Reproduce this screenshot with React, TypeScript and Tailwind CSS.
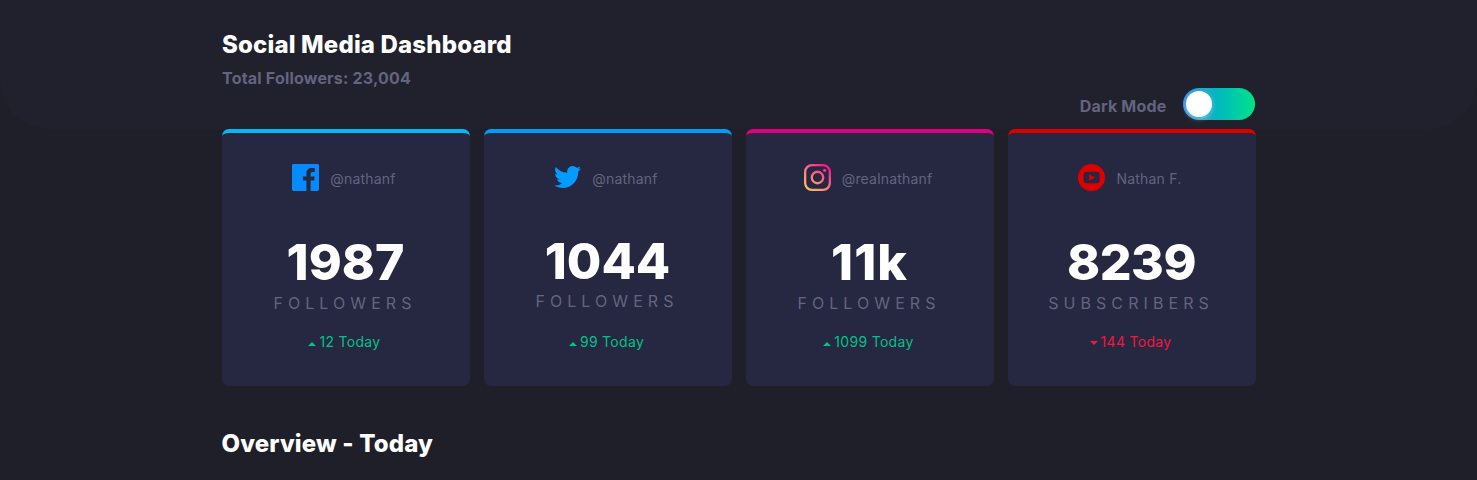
import React from "react";

type CardData = {
  bar: string;
  icon: React.ReactNode;
  handle: string;
  count: string;
  tracking: string;
  label: string;
  change: string;
  down?: boolean;
  shift?: boolean;
};

const Facebook = () => (
  <svg viewBox="0 0 20 20" className="h-[27px] w-[27px]">
    <path
      fill="#048bff"
      d="M18.896 0H1.104C.494 0 0 .494 0 1.104v17.793C0 19.506.494 20 1.104 20h9.58v-7.745H8.076V9.237h2.606V7.01c0-2.583 1.578-3.99 3.883-3.99 1.104 0 2.052.082 2.329.119v2.7h-1.598c-1.254 0-1.496.597-1.496 1.47v1.928h2.989l-.39 3.018h-2.6V20h5.098c.608 0 1.102-.494 1.102-1.104V1.104C20 .494 19.506 0 18.896 0z"
    />
  </svg>
);

const Twitter = () => (
  <svg viewBox="0 -1.25 20 20" className="h-[27px] w-[27px]">
    <path
      fill="#029bff"
      d="M20 2.172a8.192 8.192 0 01-2.357.646 4.11 4.11 0 001.805-2.27 8.22 8.22 0 01-2.606.996A4.096 4.096 0 0013.847.248c-2.65 0-4.596 2.472-3.998 5.037A11.648 11.648 0 011.392 1 4.109 4.109 0 002.662 6.478 4.086 4.086 0 01.8 5.964c-.045 1.901 1.318 3.68 3.291 4.075a4.113 4.113 0 01-1.853.07 4.106 4.106 0 003.833 2.849A8.25 8.25 0 010 14.658a11.616 11.616 0 006.29 1.843c7.618 0 11.922-6.434 11.662-12.205A8.354 8.354 0 0020 2.172z"
    />
  </svg>
);

const Instagram = () => (
  <svg viewBox="0 0 20 20" className="h-[27px] w-[27px]">
    <defs>
      <linearGradient id="ig" gradientUnits="userSpaceOnUse" x1="2" y1="20" x2="18" y2="0">
        <stop offset="0" stopColor="#fdc366" />
        <stop offset=".5" stopColor="#fb7281" />
        <stop offset="1" stopColor="#f4068f" />
      </linearGradient>
    </defs>
    <g fill="none" stroke="url(#ig)" strokeWidth="1.7">
      <rect x=".85" y=".85" width="18.3" height="18.3" rx="5" />
      <circle cx="10" cy="10" r="4.25" />
    </g>
    <circle cx="15.3" cy="4.7" r="1.2" fill="url(#ig)" />
  </svg>
);

const Youtube = () => (
  <svg viewBox="0 0 20 20" className="h-[27px] w-[27px]">
    <circle cx="10" cy="10" r="10" fill="#dc0000" />
    <rect x="4.2" y="5.8" width="11.8" height="8.5" rx="2.2" fill="#262740" />
    <path d="M8.2 7.8v4.4l4.6-2.2z" fill="#dc0000" />
  </svg>
);

const cards: CardData[] = [
  { bar: "border-t-[#02b8f5]", icon: <Facebook />, handle: "@nathanf", count: "1987", tracking: "tracking-normal", label: "FOLLOWERS", change: "12 Today" },
  { bar: "border-t-[#029bf5]", icon: <Twitter />, handle: "@nathanf", count: "1044", tracking: "tracking-normal", label: "FOLLOWERS", change: "99 Today", shift: true },
  { bar: "border-t-[#df0082]", icon: <Instagram />, handle: "@realnathanf", count: "11k", tracking: "tracking-[1px]", label: "FOLLOWERS", change: "1099 Today" },
  { bar: "border-t-[#dc0000]", icon: <Youtube />, handle: "Nathan F.", count: "8239", tracking: "tracking-[-0.5px]", label: "SUBSCRIBERS", change: "144 Today", down: true },
];

function Card({ c }: { c: CardData }) {
  return (
    <article className={`flex h-[256.5px] flex-col items-center rounded-[7px] border-t-4 bg-[#262740] ${c.bar}`}>
      <div className={`mt-[31px] flex h-[27px] items-center ${c.down ? "gap-[12px] pr-[4px]" : "gap-[11px] pr-[3px]"}`}>
        {c.icon}
        <span className="pt-[2px] text-[14px] leading-5 tracking-[0.18px] text-[#63647f]">{c.handle}</span>
      </div>
      <div className={c.shift ? "mt-[44px] mb-[2px] text-center" : "mt-[45px] mb-px text-center"}>
        <p className={`text-[50px] leading-[52px] font-extrabold text-white ${c.tracking}`}>{c.count}</p>
        <p className={`${c.shift ? "mt-[4px]" : "mt-[5px]"} -ml-px text-[16px] leading-5 tracking-[5.08px] text-[#63647f]`}>{c.label}</p>
      </div>
      <div className={`${c.shift ? "mt-[19px]" : "mt-[18px]"} flex items-center gap-[3px] pr-[2px] text-[14px] leading-5 tracking-[0.3px] ${c.down ? "text-[#f01841]" : "text-[#04c08a]"}`}>
        <svg viewBox="0 0 8 4" className={c.down ? "mt-px h-1 w-2" : "mt-[4px] h-1 w-2"}>
          <path fill="currentColor" d={c.down ? "M0 0h8L4 4z" : "M0 4h8L4 0z"} />
        </svg>
        <span>{c.change}</span>
      </div>
    </article>
  );
}

export default function App() {
  return (
    <div className="h-[480px] overflow-hidden bg-[#1f1f29] font-['Inter',sans-serif]">
      <header className="h-[129px] rounded-b-[48px] bg-[#21212d]">
        <div className="ml-[222px] flex h-full w-[1032.5px] justify-between">
          <div className="pt-[29px]">
            <h1 className="text-[24px] leading-[32px] font-extrabold tracking-[0.16px] text-white">Social Media Dashboard</h1>
            <p className="mt-[7px] text-[16px] leading-5 font-bold tracking-[0.2px] text-[#63647f]">Total Followers: 23,004</p>
          </div>
          <div className="mb-[9px] flex h-8 items-center gap-4 self-end">
            <span className="pt-[3px] text-[16px] leading-5 font-bold tracking-[0.2px] text-[#63647f]">Dark Mode</span>
            <button aria-label="Dark Mode" className="flex h-8 w-[72px] items-center rounded-full bg-linear-to-r from-[#378fe6] via-[#05b5c0] via-45% to-[#05e284] px-[3px]">
              <span className="h-[26px] w-[26px] rounded-full bg-white shadow-[0_2px_5px_rgba(255,255,255,0.35)]" />
            </button>
          </div>
        </div>
      </header>
      <main className="ml-[221.5px] w-[1034px]">
        <section className="grid grid-cols-4 gap-[14px]">
          {cards.map((c) => (
            <Card key={c.count} c={c} />
          ))}
        </section>
        <h2 className="mt-[42.5px] text-[24px] leading-[32px] font-extrabold tracking-[0.16px] text-white">Overview - Today</h2>
      </main>
    </div>
  );
}
